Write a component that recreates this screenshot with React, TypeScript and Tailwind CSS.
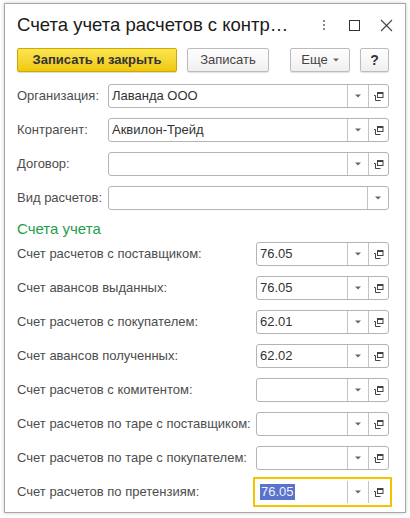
import React from "react"

const font = { fontFamily: '"Liberation Sans", Arial, sans-serif' }

function DropArrow() {
  return (
    <svg width="6" height="4" viewBox="0 0 6 4">
      <path d="M0 0.5h6L3 3.5z" fill="#666" />
    </svg>
  )
}

function OpenIcon() {
  return (
    <svg width="11" height="11" viewBox="0 0 11 11" fill="none" stroke="#444" strokeWidth="1">
      <rect x="4.5" y="1.5" width="5.5" height="5" />
      <path d="M4.5 2h5.5" strokeWidth="2" />
      <path d="M2.5 4.5v5h5" />
      <path d="M1 4.5h1.5" />
    </svg>
  )
}

interface FieldProps {
  value?: string
  open?: boolean
  focused?: boolean
  className?: string
}

function Field({ value = "", open = true, focused = false, className = "" }: FieldProps) {
  return (
    <div
      className={`flex h-6 items-stretch border bg-white ${
        focused
          ? "rounded-none border-white outline-2 outline-offset-1 outline-[#f5c400]"
          : "rounded-[3px] border-[#b4b4b4]"
      } ${className}`}
    >
      <div className="flex min-w-0 flex-1 items-center pl-[3px] text-[13px] text-[#333]">
        {focused ? (
          <span className="bg-[#5a72c9] px-[1px] leading-[16px] text-[#eef2ff]">{value}</span>
        ) : (
          value
        )}
      </div>
      <div className="flex w-[21px] items-center justify-center border-l border-[#c4c4c4]">
        <DropArrow />
      </div>
      {open && (
        <div className="flex w-[20px] items-center justify-center border-l border-[#c4c4c4]">
          <OpenIcon />
        </div>
      )}
    </div>
  )
}

const mainRows = [
  { label: "Организация:", value: "Лаванда ООО", open: true },
  { label: "Контрагент:", value: "Аквилон-Трейд", open: true },
  { label: "Договор:", value: "", open: true },
  { label: "Вид расчетов:", value: "", open: false },
]

const accountRows = [
  { label: "Счет расчетов с поставщиком:", value: "76.05" },
  { label: "Счет авансов выданных:", value: "76.05" },
  { label: "Счет расчетов с покупателем:", value: "62.01" },
  { label: "Счет авансов полученных:", value: "62.02" },
  { label: "Счет расчетов с комитентом:", value: "" },
  { label: "Счет расчетов по таре с поставщиком:", value: "" },
  { label: "Счет расчетов по таре с покупателем:", value: "" },
  { label: "Счет расчетов по претензиям:", value: "76.05", focused: true },
]

export default function App() {
  return (
    <div className="h-[518px] w-[410px] overflow-hidden bg-white pl-[4px] pt-[3px]" style={font}>
      <div className="flex h-[510px] w-[402px] flex-col border border-[#a8a8a8] bg-white pl-[12px] pr-[16px] shadow-[0_0_4px_rgba(0,0,0,0.2)]">
        {/* title bar */}
        <div className="flex h-[42px] shrink-0 items-center">
          <div className="flex-1 text-[18.5px] text-[#1a1a1a]">Счета учета расчетов с контр…</div>
          <div className="flex items-center">
            <span className="mr-[24px] flex flex-col gap-[2px]">
              <i className="block h-[2px] w-[2px] bg-[#888]" />
              <i className="block h-[2px] w-[2px] bg-[#888]" />
              <i className="block h-[2px] w-[2px] bg-[#888]" />
            </span>
            <span className="mr-[20px] block h-[11px] w-[11px] border border-[#333]" />
            <svg width="13" height="13" viewBox="0 0 13 13" className="mr-[-4px]">
              <path d="M1 1l11 11M12 1L1 12" stroke="#444" strokeWidth="1.1" />
            </svg>
          </div>
        </div>

        {/* command bar */}
        <div className="mt-[2px] flex h-6 shrink-0 items-stretch text-[13px]">
          <button className="w-[160px] rounded-[2px] border border-[#cfa900] bg-gradient-to-b from-[#fbe54f] to-[#f0c800] font-bold text-[#333] shadow-[0_1px_1px_rgba(0,0,0,0.15)]">
            Записать и закрыть
          </button>
          <button className="ml-[10px] w-[82px] rounded-[2px] border border-[#bcbcbc] bg-gradient-to-b from-white to-[#efefef] text-[#444] shadow-[0_1px_1px_rgba(0,0,0,0.12)]">
            Записать
          </button>
          <div className="flex-1" />
          <button className="flex w-[60px] items-center justify-center gap-[5px] rounded-[2px] border border-[#bcbcbc] bg-gradient-to-b from-white to-[#efefef] text-[#444] shadow-[0_1px_1px_rgba(0,0,0,0.12)]">
            Еще
            <DropArrow />
          </button>
          <button className="ml-[10px] w-[29px] rounded-[2px] border border-[#bcbcbc] bg-gradient-to-b from-white to-[#efefef] text-[14px] font-bold text-[#333] shadow-[0_1px_1px_rgba(0,0,0,0.12)]">
            ?
          </button>
        </div>

        {/* header fields */}
        <div className="mt-[12px] flex flex-col gap-[10px]">
          {mainRows.map((r) => (
            <div key={r.label} className="flex items-center">
              <div className="w-[91px] shrink-0 text-[13px] text-[#4d4d4d]">{r.label}</div>
              <Field value={r.value} open={r.open} className="flex-1" />
            </div>
          ))}
        </div>

        <div className="mt-[9px] h-5 text-[15px] leading-5 text-[#1f9e4c]">Счета учета</div>

        {/* accounts */}
        <div className="mt-[3px] flex flex-col gap-[10px]">
          {accountRows.map((r) => (
            <div key={r.label} className="flex items-center">
              <div className="w-[239px] shrink-0 whitespace-nowrap text-[13px] text-[#4d4d4d]">{r.label}</div>
              <Field value={r.value} focused={r.focused} className="flex-1" />
            </div>
          ))}
        </div>
      </div>
    </div>
  )
}
